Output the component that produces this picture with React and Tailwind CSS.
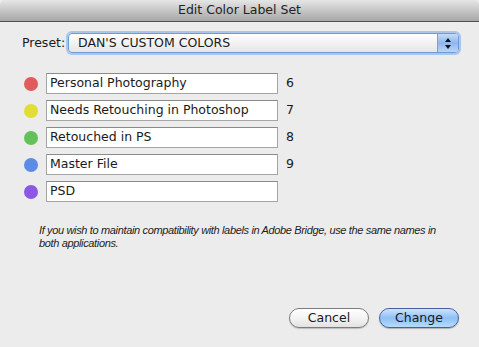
const labels = [
  { color: "bg-[#e05c5c]", name: "Personal Photography", key: "6" },
  { color: "bg-[#dfdd36]", name: "Needs Retouching in Photoshop", key: "7" },
  { color: "bg-[#63c15a]", name: "Retouched in PS", key: "8" },
  { color: "bg-[#5d8ce6]", name: "Master File", key: "9" },
  { color: "bg-[#8b58e4]", name: "PSD", key: "" },
];

export default function App() {
  return (
    <div className="w-[479px] h-[347px] bg-[#ececec] flex flex-col overflow-hidden font-['DejaVu_Sans',sans-serif] text-[12.5px] text-[#1a1a1a]">
      {/* title bar */}
      <div className="h-[22px] shrink-0 rounded-t-[5px] bg-gradient-to-b from-[#e6e6e6] to-[#a7a7a7] border-b border-[#505050] flex items-center justify-center">
        <span className="text-[12.5px] text-[#222]">Edit Color Label Set</span>
      </div>

      {/* preset */}
      <div className="mt-[11px] flex items-center pl-[22px]">
        <span className="w-[46px]">Preset:</span>
        <div className="w-[391px] h-[20px] rounded-[4px] border border-[#6f9ad6] shadow-[0_0_0_2px_#a9c6ee] bg-gradient-to-b from-white via-[#f2f2f2] to-[#e6e6e6] flex items-center">
          <span className="flex-1 pl-[9px]">DAN'S CUSTOM COLORS</span>
          <div className="w-[21px] h-full rounded-r-[3px] border-l border-[#7a9fd4] bg-gradient-to-b from-[#c6dbf7] via-[#8db7ee] to-[#b9d5f8] flex flex-col items-center justify-center gap-[3px]">
            <svg width="6" height="4" viewBox="0 0 6 4"><path d="M3 0 L6 4 L0 4 Z" fill="#111" /></svg>
            <svg width="6" height="4" viewBox="0 0 6 4"><path d="M0 0 L6 0 L3 4 Z" fill="#111" /></svg>
          </div>
        </div>
      </div>

      {/* label rows */}
      <div className="mt-[20px] flex flex-col gap-[6px] pl-[24px]">
        {labels.map((l) => (
          <div key={l.name} className="flex items-center h-[21px]">
            <div className={`w-[14px] h-[14px] rounded-full ${l.color}`} />
            <div className="ml-[8px] w-[232px] h-[21px] bg-white border border-[#a5a5a5] border-t-[#8a8a8a] flex items-center pl-[3px]">
              {l.name}
            </div>
            <span className="ml-[8px]">{l.key}</span>
          </div>
        ))}
      </div>

      {/* note */}
      <p className="mt-[22px] ml-[39px] w-[405px] font-['Liberation_Sans',sans-serif] italic text-[11px] tracking-[-0.35px] leading-[13px] text-[#222]">
        If you wish to maintain compatibility with labels in Adobe Bridge, use the same names in both applications.
      </p>

      {/* buttons */}
      <div className="mt-auto mb-[19px] flex justify-end gap-[10px] pr-[20px]">
        <button className="w-[80px] h-[20px] rounded-full border border-[#7c7c7c] bg-gradient-to-b from-white via-[#f4f4f4] to-[#e2e2e2] shadow-[0_1px_1px_rgba(0,0,0,0.2)] text-[12.5px]">
          Cancel
        </button>
        <button className="w-[80px] h-[20px] rounded-full border border-[#4a5fa0] bg-gradient-to-b from-[#cfe3fb] via-[#8ec0f5] to-[#b4dcfd] shadow-[0_1px_1px_rgba(0,0,0,0.25)] text-[12.5px]">
          Change
        </button>
      </div>
    </div>
  );
}
